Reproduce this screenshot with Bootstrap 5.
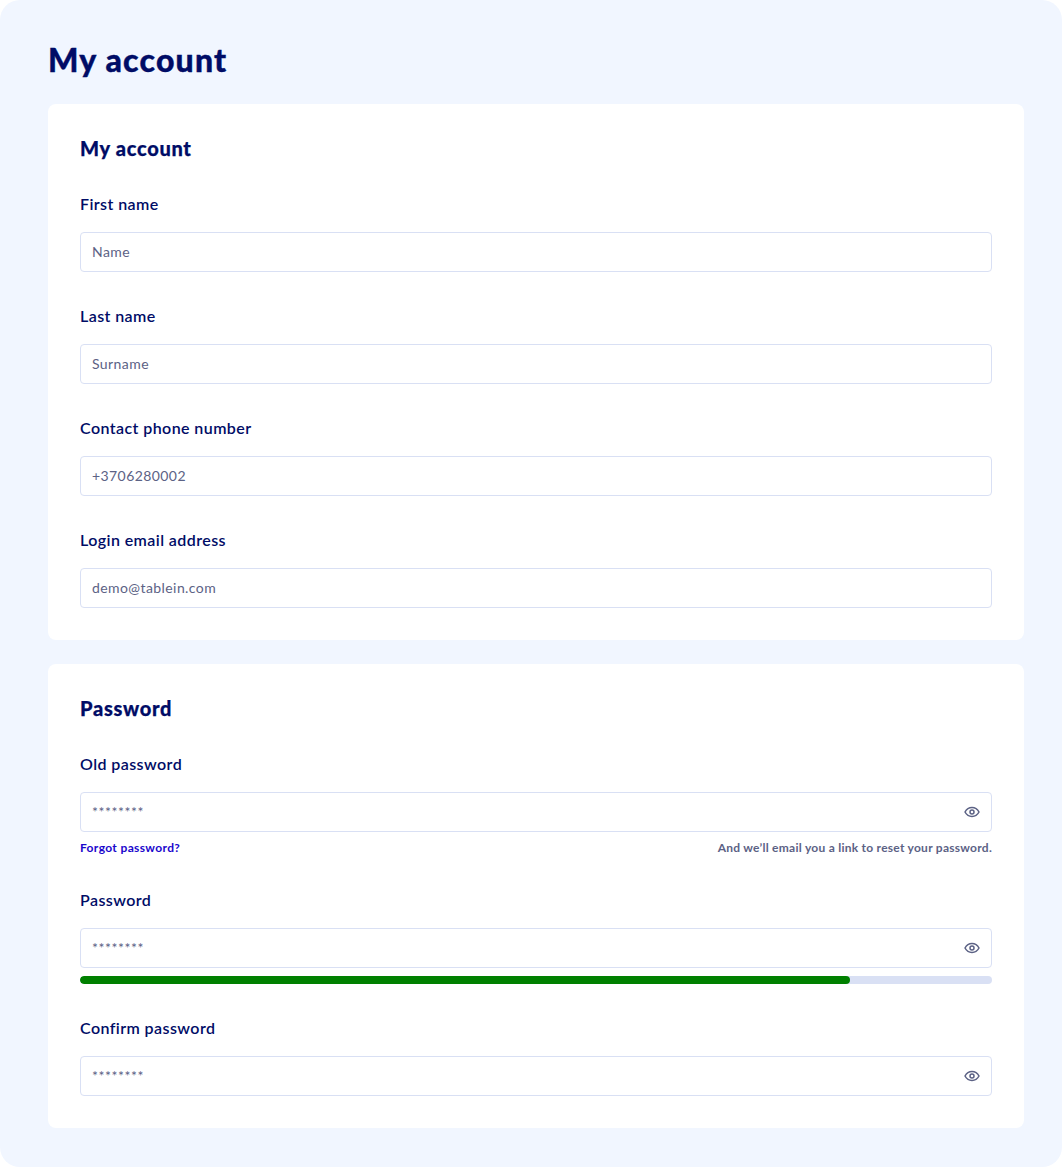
<!DOCTYPE html>
<html lang="en">
<head>
<meta charset="utf-8">
<title>My account</title>
<link rel="stylesheet" href="https://cdn.jsdelivr.net/npm/bootstrap@5.3.0/dist/css/bootstrap.min.css">
<style>
html,body{background:#fff;margin:0;}
body{font-family:"Lato","Noto Sans",sans-serif;color:#000c66;}
.acct-page{background:#f1f6ff;border-radius:20px;padding:40px 38px 39px 48px;min-height:1167px;}
.acct-title{font-size:32px;line-height:40px;font-weight:900;color:#000c66;margin:0 0 24px;letter-spacing:1.2px;-webkit-text-stroke:.4px #000c66;}
.acct-panel{background:#fff;border:0;border-radius:8px;padding:32px;margin-bottom:24px;}
.acct-panel:last-child{margin-bottom:0;}
.acct-heading{font-size:20px;line-height:24px;font-weight:900;color:#000c66;margin:0 0 32px;letter-spacing:.7px;-webkit-text-stroke:.25px #000c66;}
.acct-field{margin-bottom:32px;}
.acct-field:last-child{margin-bottom:0;}
.acct-label{display:block;font-size:16px;line-height:24px;font-weight:600;color:#000c66;margin:0 0 16px;letter-spacing:.42px;}
.acct-input{height:40px;border:1px solid #d9e0f4;border-radius:4px;padding:0 11px 2px;font-size:14px;color:#5c6285;box-shadow:none;letter-spacing:.42px;}
.acct-input::placeholder{color:#5c6285;opacity:1;}
.acct-stars{letter-spacing:.55px;padding-bottom:1px;}
.acct-eye{position:absolute;right:12px;top:12px;width:16px;height:16px;display:block;}
.acct-help{font-size:12px;line-height:16px;font-weight:700;margin-top:8px;letter-spacing:.26px;}
.acct-link{color:#1a06cc;text-decoration:none;letter-spacing:.36px;}
.acct-note{color:#5c6285;}
.acct-meter{height:8px;margin-top:8px;background:#d9e0f4;border-radius:4px;}
.acct-meter .progress-bar{background:#008000;border-radius:4px;}
</style>
</head>
<body>
<div class="acct-page">
  <h1 class="acct-title">My account</h1>

  <div class="card acct-panel">
    <h2 class="acct-heading">My account</h2>
    <div class="acct-field">
      <label class="acct-label" for="f1">First name</label>
      <input id="f1" class="form-control acct-input" type="text" placeholder="Name">
    </div>
    <div class="acct-field">
      <label class="acct-label" for="f2">Last name</label>
      <input id="f2" class="form-control acct-input" type="text" placeholder="Surname">
    </div>
    <div class="acct-field">
      <label class="acct-label" for="f3">Contact phone number</label>
      <input id="f3" class="form-control acct-input" type="text" value="+3706280002">
    </div>
    <div class="acct-field">
      <label class="acct-label" for="f4">Login email address</label>
      <input id="f4" class="form-control acct-input" type="text" value="demo@tablein.com">
    </div>
  </div>

  <div class="card acct-panel">
    <h2 class="acct-heading">Password</h2>
    <div class="acct-field">
      <label class="acct-label" for="p1">Old password</label>
      <div class="position-relative">
        <input id="p1" class="form-control acct-input acct-stars" type="text" value="********">
        <svg class="acct-eye" viewBox="0 0 16 16" fill="none" stroke="#5c6285" stroke-width="1.5"><path d="M1 8c1.6-3 4-4.5 7-4.5S13.400 5 15 8c-1.600 3-4 4.500-7 4.500S2.600 11 1 8z"/><circle cx="8" cy="8" r="2"/></svg>
      </div>
      <div class="d-flex justify-content-between acct-help">
        <a href="#" class="acct-link">Forgot password?</a>
        <span class="acct-note">And we’ll email you a link to reset your password.</span>
      </div>
    </div>
    <div class="acct-field">
      <label class="acct-label" for="p2">Password</label>
      <div class="position-relative">
        <input id="p2" class="form-control acct-input acct-stars" type="text" value="********">
        <svg class="acct-eye" viewBox="0 0 16 16" fill="none" stroke="#5c6285" stroke-width="1.5"><path d="M1 8c1.6-3 4-4.5 7-4.5S13.400 5 15 8c-1.600 3-4 4.500-7 4.500S2.600 11 1 8z"/><circle cx="8" cy="8" r="2"/></svg>
      </div>
      <div class="progress acct-meter"><div class="progress-bar" style="width:84.4%"></div></div>
    </div>
    <div class="acct-field">
      <label class="acct-label" for="p3">Confirm password</label>
      <div class="position-relative">
        <input id="p3" class="form-control acct-input acct-stars" type="text" value="********">
        <svg class="acct-eye" viewBox="0 0 16 16" fill="none" stroke="#5c6285" stroke-width="1.5"><path d="M1 8c1.6-3 4-4.5 7-4.5S13.400 5 15 8c-1.600 3-4 4.500-7 4.500S2.600 11 1 8z"/><circle cx="8" cy="8" r="2"/></svg>
      </div>
    </div>
  </div>
</div>
<script src="https://cdn.jsdelivr.net/npm/bootstrap@5.3.0/dist/js/bootstrap.bundle.min.js"></script>
</body>
</html>
